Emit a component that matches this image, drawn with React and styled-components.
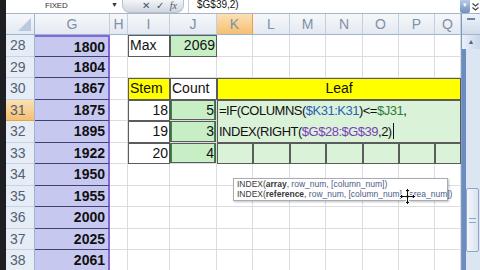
import React from 'react';
import styled, { createGlobalStyle, css } from 'styled-components';

const GlobalStyle = createGlobalStyle`
  html, body { margin: 0; padding: 0; background: #fff; }
  body {
    width: 480px;
    height: 270px;
    overflow: hidden;
    font-family: "Liberation Sans", Arial, sans-serif;
  }
`;

const Window = styled.div`
  position: relative;
  width: 480px;
  height: 270px;
  box-sizing: border-box;
  border-left: 6px solid #1d1f22;
  display: flex;
  flex-direction: column;
  overflow: hidden;
  background: #fff;
`;

// formula bar (top strip, mostly cut off)
const FormulaBar = styled.div`
  height: 13px;
  flex: none;
  display: flex;
  align-items: stretch;
  border-bottom: 1px solid #a9b4c2;
  background: #fff;
`;

const NameBox = styled.div`
  width: 105px;
  padding-left: 39px;
  box-sizing: border-box;
  font-size: 8px;
  line-height: 11px;
  color: #333;
  letter-spacing: -0.2px;
`;

const DropArrow = styled.div`
  width: 10px;
  font-size: 7px;
  line-height: 10px;
  color: #333;
`;

const ButtonPill = styled.div`
  width: 62px;
  margin-left: 1px;
  border-radius: 0 0 8px 8px;
  background: linear-gradient(#f3f5f8, #cfd6df);
  border: 1px solid #b7c0cc;
  border-top: none;
  display: flex;
  justify-content: flex-end;
  gap: 6px;
  padding-right: 6px;
  box-sizing: border-box;
  font-size: 10px;
  line-height: 11px;
  color: #4a5566;
`;

const FxGlyph = styled.span`
  font-family: "Liberation Serif", serif;
  font-style: italic;
`;

const FormulaText = styled.div`
  flex: 1;
  padding-left: 8px;
  font-size: 10px;
  line-height: 9px;
  color: #111;
  margin-left: 4px;
  border-left: 1px solid #c5ccd6;
`;

const BarEnd = styled.div`
  width: 20px;
  display: flex;
  align-items: center;
  gap: 1px;
`;

const ExpandBtn = styled.div`
  width: 10px;
  height: 100%;
  background: linear-gradient(#b7cbe6, #6f8fbd);
  border-radius: 0 0 2px 2px;
  color: #fff;
  font-size: 7px;
  line-height: 10px;
  text-align: center;
`;

const Body = styled.div`
  flex: 1;
  display: flex;
`;

const Sheet = styled.div`
  display: grid;
  grid-template-columns: 29px 75px 18px 42px 47px 36px 37px 36px 37px 36px 36px 26px;
  grid-template-rows: 21px repeat(11, 21.5px);
  font-size: 14px;
  color: #111;
`;

const headBg = css`
  background: linear-gradient(#f6f8fb, #e3e9f1);
`;

const activeBg = css`
  background: linear-gradient(#fbe1b4, #f6bf72);
`;

const Corner = styled.div`
  ${headBg};
  border-right: 1px solid #9eb4cf;
  border-bottom: 1px solid #9eb4cf;
  box-sizing: border-box;
  position: relative;
  &::after {
    content: '';
    position: absolute;
    right: 3px;
    bottom: 3px;
    border-left: 13px solid transparent;
    border-bottom: 13px solid #b9c9de;
  }
`;

const ColHead = styled.div`
  ${p => (p.$active ? activeBg : headBg)};
  border-right: 1px solid ${p => (p.$active ? '#e2a24e' : '#c2cfdf')};
  border-bottom: 1px solid #9eb4cf;
  box-sizing: border-box;
  text-align: center;
  line-height: 21px;
  color: #8090a5;
  font-size: 14px;
`;

const RowHead = styled.div`
  ${p => (p.$active ? activeBg : css`background: #e6edf7;`)};
  border-right: 1px solid #9eb4cf;
  border-bottom: 1px solid ${p => (p.$active ? '#e2a24e' : '#c7d3e3')};
  box-sizing: border-box;
  padding-left: 4px;
  line-height: 21px;
  color: #55606f;
`;

const Cell = styled.div`
  grid-column: span ${p => p.$span || 1};
  box-sizing: border-box;
  background: ${p => p.$bg || '#fff'};
  border-right: 1px solid #dadcdf;
  border-bottom: 1px solid #dadcdf;
  text-align: ${p => p.$align || 'left'};
  padding: 0 2px;
  line-height: 21px;
  white-space: nowrap;
  overflow: hidden;
  ${p => p.$boxed && css`
    border: none;
    box-shadow: inset 0 0 0 1px #5b5b5b;
  `}
  ${p => p.$range && css`
    box-shadow: inset 0 0 0 1px #5b5b5b, inset -2px 0 0 0 #2f8f3b, inset 2px 0 0 0 #2f8f3b;
  `}
`;

const GCell = styled.div`
  box-sizing: border-box;
  background: #c7c8f0;
  border-bottom: 1px solid #3e4170;
  border-right: 2px solid #8468d4;
  ${p => p.$first && css`border-top: 2px solid #8468d4;`}
  text-align: right;
  padding-right: 3px;
  font-weight: bold;
  line-height: 20px;
`;

const EditCell = styled.div`
  grid-column: span 7;
  grid-row: span 2;
  background: #daf2d8;
  box-shadow: inset 0 0 0 1px #5b5b5b;
  padding: 0 2px;
  font-size: 13px;
  line-height: 21.5px;
  letter-spacing: -0.5px;
  white-space: nowrap;
  overflow: hidden;
`;

const Ref = styled.span`
  color: ${p => p.$c};
`;

const Caret = styled.span`
  display: inline-block;
  width: 1px;
  height: 16px;
  background: #111;
  vertical-align: -3px;
  margin-left: 1px;
`;

const Scrollbar = styled.div`
  flex: 1;
  display: flex;
  flex-direction: column;
  background: #dfe8f4;
  border-left: 1px solid #7e9ac3;
`;

const ScrollTop = styled.div`
  height: 21px;
  background: linear-gradient(#eef3fa, #cfdbeb);
  border-bottom: 1px solid #9eb4cf;
  display: flex;
  justify-content: center;
  padding-top: 4px;
  box-sizing: border-box;
`;

const Split = styled.div`
  width: 8px;
  height: 2px;
  background: #6f86a8;
`;

const ScrollArrow = styled.div`
  height: 14px;
  font-size: 7px;
  line-height: 14px;
  text-align: center;
  color: #4d6488;
  background: linear-gradient(90deg, #e9f0f9, #c9d7ea);
`;

const Track = styled.div`
  flex: 1;
  display: flex;
  flex-direction: column;
  padding: 139px 1px 0 4px;
  background: linear-gradient(90deg, #6a8cc0 0, #6a8cc0 4px, #dce6f3 4px);
`;

const Thumb = styled.div`
  height: 62px;
  border: 1px solid #8ea6c8;
  border-radius: 2px;
  background: linear-gradient(90deg, #f4f7fb, #d9e3ef);
  display: flex;
  align-items: center;
  justify-content: center;
`;

const Grip = styled.div`
  width: 7px;
  height: 5px;
  border-top: 1px solid #8ea6c8;
  border-bottom: 1px solid #8ea6c8;
  box-sizing: border-box;
`;

const Tooltip = styled.div`
  position: absolute;
  left: 227px;
  top: 178px;
  width: 215px;
  padding: 1px 3px;
  box-sizing: border-box;
  background: #fff;
  border: 1px solid #a8adb5;
  box-shadow: 1px 1px 2px rgba(0, 0, 0, 0.25);
  font-size: 8.5px;
  line-height: 9.5px;
  color: #3a3a3a;
  white-space: nowrap;
`;

const TipLink = styled.span`
  color: #4a5d85;
`;

const MoveCursor = styled.svg`
  position: absolute;
  left: 393px;
  top: 188px;
`;

const cols = ['G', 'H', 'I', 'J', 'K', 'L', 'M', 'N', 'O', 'P', 'Q'];
const gValues = [1800, 1804, 1867, 1875, 1895, 1922, 1950, 1955, 2000, 2025, 2061];
const GREEN = '#c8eec6';
const LIGHT_GREEN = '#daf2d8';
const YELLOW = '#ffff00';

function blanks(n, key) {
  return Array.from({ length: n }, (_, i) => <Cell key={key + i} />);
}

function rowCells(row) {
  switch (row) {
    case 28:
      return [
        <Cell key="h" />,
        <Cell key="i" $boxed>Max</Cell>,
        <Cell key="j" $boxed $bg={GREEN} $align="right">2069</Cell>,
        ...blanks(7, 'b'),
      ];
    case 30:
      return [
        <Cell key="h" />,
        <Cell key="i" $boxed $bg={YELLOW}>Stem</Cell>,
        <Cell key="j" $boxed>Count</Cell>,
        <Cell key="k" $boxed $bg={YELLOW} $span={7} $align="center">Leaf</Cell>,
      ];
    case 31:
      return [
        <Cell key="h" />,
        <Cell key="i" $boxed $align="right">18</Cell>,
        <Cell key="j" $range $bg={GREEN} $align="right">5</Cell>,
        <EditCell key="k">
          =IF(COLUMNS(<Ref $c="#2c5fb8">$K31:K31</Ref>)&lt;=<Ref $c="#2f7a3c">$J31</Ref>,
          <br />
          INDEX(RIGHT(<Ref $c="#7a3db8">$G$28:$G$39</Ref>,2)<Caret />
        </EditCell>,
      ];
    case 32:
      return [
        <Cell key="h" />,
        <Cell key="i" $boxed $align="right">19</Cell>,
        <Cell key="j" $range $bg={GREEN} $align="right">3</Cell>,
      ];
    case 33:
      return [
        <Cell key="h" />,
        <Cell key="i" $boxed $align="right">20</Cell>,
        <Cell key="j" $range $bg={GREEN} $align="right">4</Cell>,
        ...Array.from({ length: 7 }, (_, i) => <Cell key={'g' + i} $boxed $bg={LIGHT_GREEN} />),
      ];
    default:
      return blanks(10, 'b');
  }
}

export default function App() {
  return (
    <Window>
      <GlobalStyle />
      <FormulaBar>
        <NameBox>FIXED</NameBox>
        <DropArrow>▼</DropArrow>
        <ButtonPill>
          <span>✕</span>
          <span>✓</span>
          <FxGlyph>fx</FxGlyph>
        </ButtonPill>
        <FormulaText>$G$39,2)</FormulaText>
        <BarEnd>
          <ExpandBtn>▾</ExpandBtn>
          <svg width="9" height="10" viewBox="0 0 9 10">
            <path d="M1.5 1.5 L4.5 4 L7.5 1.5 M1.5 5.5 L4.5 8 L7.5 5.5" fill="none" stroke="#444" strokeWidth="1.2" />
          </svg>
        </BarEnd>
      </FormulaBar>
      <Body>
        <Sheet>
          <Corner />
          {cols.map(c => (
            <ColHead key={c} $active={c === 'K'}>{c}</ColHead>
          ))}
          {gValues.map((v, i) => {
            const row = 28 + i;
            return (
              <React.Fragment key={row}>
                <RowHead $active={row === 31}>{row}</RowHead>
                <GCell $first={i === 0}>{v}</GCell>
                {rowCells(row)}
              </React.Fragment>
            );
          })}
        </Sheet>
        <Scrollbar>
          <ScrollTop>
            <Split />
          </ScrollTop>
          <ScrollArrow>▲</ScrollArrow>
          <Track>
            <Thumb>
              <Grip />
            </Thumb>
          </Track>
        </Scrollbar>
      </Body>
      <Tooltip>
        INDEX(<b>array</b>, <TipLink>row_num, [column_num])</TipLink>
        <br />
        INDEX(<b>reference</b>, <TipLink>row_num, [column_num], [area_num])</TipLink>
      </Tooltip>
      <MoveCursor width="17" height="17" viewBox="0 0 17 17">
        <path
          d="M8.5 0.5 L11.5 3.5 L9.5 3.5 L9.5 7.5 L13.5 7.5 L13.5 5.5 L16.5 8.5 L13.5 11.5 L13.5 9.5 L9.5 9.5 L9.5 13.5 L11.5 13.5 L8.5 16.5 L5.5 13.5 L7.5 13.5 L7.5 9.5 L3.5 9.5 L3.5 11.5 L0.5 8.5 L3.5 5.5 L3.5 7.5 L7.5 7.5 L7.5 3.5 L5.5 3.5 Z"
          fill="#111"
          stroke="#fff"
          strokeWidth="1"
        />
      </MoveCursor>
    </Window>
  );
}
